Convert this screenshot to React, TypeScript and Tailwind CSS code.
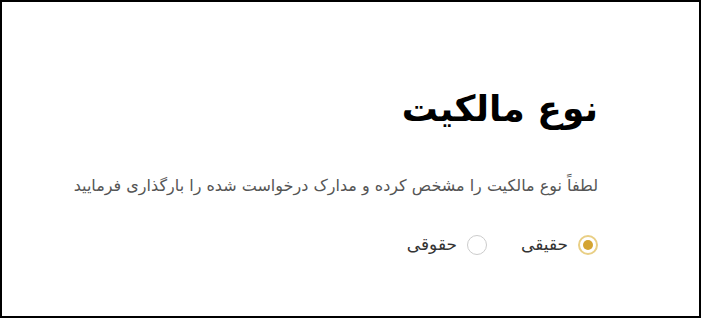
import { useState } from "react";

const options = [
  { key: "real", label: "حقیقی" },
  { key: "legal", label: "حقوقی" },
];

const App = () => {
  const [ownership, setOwnership] = useState("real");

  return (
    <div
      dir="rtl"
      className="h-[318px] w-full border-2 border-black bg-white pr-[101px] pt-[80px] text-black"
      style={{ fontFamily: '"DejaVu Sans", "Noto Sans", sans-serif' }}
    >
      <h1 className="text-[36px] font-bold leading-[54px]">نوع مالکیت</h1>
      <p className="mt-[38px] text-[16px] leading-6 text-[#555555]">
        لطفاً نوع مالکیت را مشخص کرده و مدارک درخواست شده را بارگذاری فرمایید
      </p>
      <div className="mt-[34px] flex items-center gap-[34px]">
        {options.map((o) => (
          <label
            key={o.key}
            className="flex cursor-pointer items-center gap-[10px] text-[17px] text-[#333333]"
            onClick={() => setOwnership(o.key)}
          >
            <span
              className={
                ownership === o.key
                  ? "flex h-[20px] w-[20px] items-center justify-center rounded-full border-2 border-[#e9cf85]"
                  : "flex h-[20px] w-[20px] items-center justify-center rounded-full border border-[#cccccc]"
              }
            >
              {ownership === o.key && (
                <span className="h-[10px] w-[10px] rounded-full bg-[#d4a431]" />
              )}
            </span>
            {o.label}
          </label>
        ))}
      </div>
    </div>
  );
};

export default App;
